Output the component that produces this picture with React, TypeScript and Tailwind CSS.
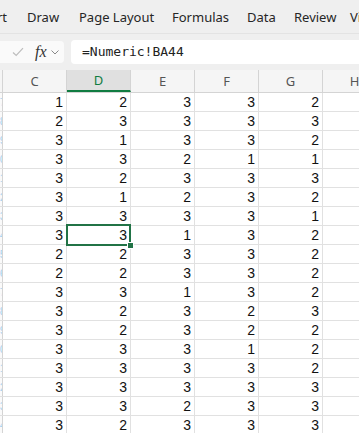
import React from 'react';

const tabs: { label: string; cls: string }[] = [
  { label: 'Insert', cls: 'w-[40px] ml-[-33px] text-right' },
  { label: 'Draw', cls: 'w-[52px] ml-[20px]' },
  { label: 'Page Layout', cls: 'w-[93px]' },
  { label: 'Formulas', cls: 'w-[75px]' },
  { label: 'Data', cls: 'w-[47px]' },
  { label: 'Review', cls: 'w-[56px]' },
  { label: 'View', cls: 'w-[40px]' },
];

const columns = ['C', 'D', 'E', 'F', 'G', 'H'];

// values for C..G, one row per line
const rows: number[][] = [
  [1, 2, 3, 3, 2],
  [2, 3, 3, 3, 3],
  [3, 1, 3, 3, 2],
  [3, 3, 2, 1, 1],
  [3, 2, 3, 3, 3],
  [3, 1, 2, 3, 2],
  [3, 3, 3, 3, 1],
  [3, 3, 1, 3, 2],
  [2, 2, 3, 3, 2],
  [2, 2, 3, 3, 2],
  [3, 3, 1, 3, 2],
  [3, 2, 3, 2, 3],
  [3, 2, 3, 2, 2],
  [3, 3, 3, 1, 2],
  [3, 3, 3, 3, 2],
  [3, 3, 3, 3, 3],
  [3, 3, 2, 3, 3],
  [3, 2, 3, 3, 3],
];

const SELECTED_ROW = 7;
const SELECTED_COL = 1;

export default function App() {
  return (
    <div className="w-[359px] h-[433px] overflow-hidden bg-white font-['Noto_Sans',sans-serif] text-[#262626]">
      {/* ribbon tabs */}
      <div className="h-[34px] flex items-center pt-[2px] bg-[#efefef] text-[13px] whitespace-nowrap overflow-hidden border-b border-[#e3e3e3]">
        {tabs.map(t => (
          <span key={t.label} className={`shrink-0 ${t.cls}`}>{t.label}</span>
        ))}
      </div>

      {/* formula bar */}
      <div className="h-[36px] flex items-center gap-[7px] bg-[#efefef] pb-[1px]">
        <div className="w-[64px] h-[22px] shrink-0 bg-[#fafafa] rounded-r-[4px] flex items-center">
          <svg width="12" height="10" viewBox="0 0 12 10" className="ml-[12px]">
            <path d="M1 5.5 L4.2 8.5 L11 1.2" fill="none" stroke="#bdbdbd" strokeWidth="1.2" />
          </svg>
          <span className="ml-[11px] font-['Liberation_Serif',serif] italic text-[16px] leading-none text-[#333]">fx</span>
          <svg width="8" height="5" viewBox="0 0 8 5" className="ml-[4px] mt-[2px]">
            <path d="M0.5 0.5 L4 4 L7.5 0.5" fill="none" stroke="#888" strokeWidth="1" />
          </svg>
        </div>
        <div className="flex-1 h-[24px] bg-white rounded-l-[4px] flex items-center pl-[11px] font-['DejaVu_Sans_Mono',monospace] text-[13px] text-[#222]">
          =Numeric!BA44
        </div>
      </div>

      {/* column headers */}
      <div className="h-[23px] flex bg-[#f5f5f5] border-b border-[#d4d4d4] text-[13px] text-[#555]">
        <div className="w-[3px] shrink-0 border-r border-[#d4d4d4]" />
        {columns.map((c, i) => (
          <div
            key={c}
            className={
              i === SELECTED_COL
                ? 'w-[64px] shrink-0 flex items-center justify-center pt-[1px] bg-[#e0e0e0] text-[#107c41] border-r border-[#d4d4d4] border-b-2 border-b-[#107c41]'
                : 'w-[64px] shrink-0 flex items-center justify-center pt-[1px] border-r border-[#d4d4d4]'
            }
          >
            {c}
          </div>
        ))}
      </div>

      {/* grid */}
      <div className="font-['Liberation_Sans',sans-serif] text-[14px] text-[#111]">
        {rows.map((r, ri) => (
          <div key={ri} className="h-[19px] flex border-b border-[#e1e1e1]">
            <div className="w-[3px] shrink-0 overflow-hidden bg-[#fafafa] border-r border-[#d4d4d4] flex justify-end">
              <span className="text-[11px] leading-[18px] text-[#a9d4f0] -mr-[4px]">{ri + 37}</span>
            </div>
            {r.map((v, ci) => (
              <div
                key={ci}
                className="relative w-[64px] shrink-0 border-r border-[#e1e1e1] flex items-center justify-end pr-[3px] pt-[1px]"
              >
                {v}
                {ri === SELECTED_ROW && ci === SELECTED_COL && (
                  <>
                    <div className="absolute z-10 -left-[1px] -top-[2px] -right-[1px] -bottom-[2px] border-2 border-[#217346]" />
                    <div className="absolute z-10 -right-[4px] -bottom-[5px] w-[7px] h-[7px] bg-[#217346] border border-white" />
                  </>
                )}
              </div>
            ))}
            <div className="w-[64px] shrink-0" />
          </div>
        ))}
      </div>
    </div>
  );
}
